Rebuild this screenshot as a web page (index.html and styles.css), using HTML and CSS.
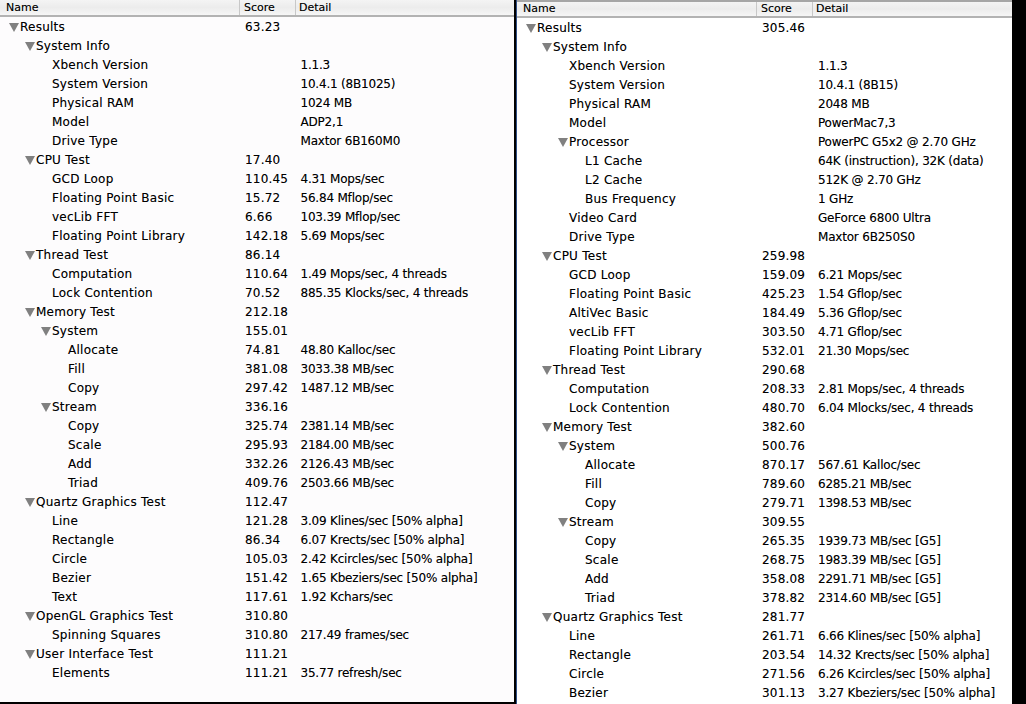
FILE: index.html
```html
<!DOCTYPE html>
<html lang="en">
<head>
<meta charset="utf-8">
<title>Xbench Results</title>
<link rel="stylesheet" href="styles.css">
</head>
<body>
<main class="stage">
<section class="panel panel-left">
<header class="head"><div class="h-name">Name</div><div class="h-score">Score</div><div class="h-detail">Detail</div></header>
<div class="row"><div class="name l0"><i class="tri"></i>Results</div><div class="score">63.23</div><div class="detail"></div></div>
<div class="row"><div class="name l1"><i class="tri"></i>System Info</div><div class="score"></div><div class="detail"></div></div>
<div class="row"><div class="name l2">Xbench Version</div><div class="score"></div><div class="detail">1.1.3</div></div>
<div class="row"><div class="name l2">System Version</div><div class="score"></div><div class="detail">10.4.1 (8B1025)</div></div>
<div class="row"><div class="name l2">Physical RAM</div><div class="score"></div><div class="detail">1024 MB</div></div>
<div class="row"><div class="name l2">Model</div><div class="score"></div><div class="detail">ADP2,1</div></div>
<div class="row"><div class="name l2">Drive Type</div><div class="score"></div><div class="detail">Maxtor 6B160M0</div></div>
<div class="row"><div class="name l1"><i class="tri"></i>CPU Test</div><div class="score">17.40</div><div class="detail"></div></div>
<div class="row"><div class="name l2">GCD Loop</div><div class="score">110.45</div><div class="detail">4.31 Mops/sec</div></div>
<div class="row"><div class="name l2">Floating Point Basic</div><div class="score">15.72</div><div class="detail">56.84 Mflop/sec</div></div>
<div class="row"><div class="name l2">vecLib FFT</div><div class="score">6.66</div><div class="detail">103.39 Mflop/sec</div></div>
<div class="row"><div class="name l2">Floating Point Library</div><div class="score">142.18</div><div class="detail">5.69 Mops/sec</div></div>
<div class="row"><div class="name l1"><i class="tri"></i>Thread Test</div><div class="score">86.14</div><div class="detail"></div></div>
<div class="row"><div class="name l2">Computation</div><div class="score">110.64</div><div class="detail">1.49 Mops/sec, 4 threads</div></div>
<div class="row"><div class="name l2">Lock Contention</div><div class="score">70.52</div><div class="detail">885.35 Klocks/sec, 4 threads</div></div>
<div class="row"><div class="name l1"><i class="tri"></i>Memory Test</div><div class="score">212.18</div><div class="detail"></div></div>
<div class="row"><div class="name l2"><i class="tri"></i>System</div><div class="score">155.01</div><div class="detail"></div></div>
<div class="row"><div class="name l3">Allocate</div><div class="score">74.81</div><div class="detail">48.80 Kalloc/sec</div></div>
<div class="row"><div class="name l3">Fill</div><div class="score">381.08</div><div class="detail">3033.38 MB/sec</div></div>
<div class="row"><div class="name l3">Copy</div><div class="score">297.42</div><div class="detail">1487.12 MB/sec</div></div>
<div class="row"><div class="name l2"><i class="tri"></i>Stream</div><div class="score">336.16</div><div class="detail"></div></div>
<div class="row"><div class="name l3">Copy</div><div class="score">325.74</div><div class="detail">2381.14 MB/sec</div></div>
<div class="row"><div class="name l3">Scale</div><div class="score">295.93</div><div class="detail">2184.00 MB/sec</div></div>
<div class="row"><div class="name l3">Add</div><div class="score">332.26</div><div class="detail">2126.43 MB/sec</div></div>
<div class="row"><div class="name l3">Triad</div><div class="score">409.76</div><div class="detail">2503.66 MB/sec</div></div>
<div class="row"><div class="name l1"><i class="tri"></i>Quartz Graphics Test</div><div class="score">112.47</div><div class="detail"></div></div>
<div class="row"><div class="name l2">Line</div><div class="score">121.28</div><div class="detail">3.09 Klines/sec [50% alpha]</div></div>
<div class="row"><div class="name l2">Rectangle</div><div class="score">86.34</div><div class="detail">6.07 Krects/sec [50% alpha]</div></div>
<div class="row"><div class="name l2">Circle</div><div class="score">105.03</div><div class="detail">2.42 Kcircles/sec [50% alpha]</div></div>
<div class="row"><div class="name l2">Bezier</div><div class="score">151.42</div><div class="detail">1.65 Kbeziers/sec [50% alpha]</div></div>
<div class="row"><div class="name l2">Text</div><div class="score">117.61</div><div class="detail">1.92 Kchars/sec</div></div>
<div class="row"><div class="name l1"><i class="tri"></i>OpenGL Graphics Test</div><div class="score">310.80</div><div class="detail"></div></div>
<div class="row"><div class="name l2">Spinning Squares</div><div class="score">310.80</div><div class="detail">217.49 frames/sec</div></div>
<div class="row"><div class="name l1"><i class="tri"></i>User Interface Test</div><div class="score">111.21</div><div class="detail"></div></div>
<div class="row"><div class="name l2">Elements</div><div class="score">111.21</div><div class="detail">35.77 refresh/sec</div></div>
</section>
<section class="panel panel-right">
<header class="head"><div class="h-name">Name</div><div class="h-score">Score</div><div class="h-detail">Detail</div></header>
<div class="row"><div class="name l0"><i class="tri"></i>Results</div><div class="score">305.46</div><div class="detail"></div></div>
<div class="row"><div class="name l1"><i class="tri"></i>System Info</div><div class="score"></div><div class="detail"></div></div>
<div class="row"><div class="name l2">Xbench Version</div><div class="score"></div><div class="detail">1.1.3</div></div>
<div class="row"><div class="name l2">System Version</div><div class="score"></div><div class="detail">10.4.1 (8B15)</div></div>
<div class="row"><div class="name l2">Physical RAM</div><div class="score"></div><div class="detail">2048 MB</div></div>
<div class="row"><div class="name l2">Model</div><div class="score"></div><div class="detail">PowerMac7,3</div></div>
<div class="row"><div class="name l2"><i class="tri"></i>Processor</div><div class="score"></div><div class="detail">PowerPC G5x2 @ 2.70 GHz</div></div>
<div class="row"><div class="name l3">L1 Cache</div><div class="score"></div><div class="detail">64K (instruction), 32K (data)</div></div>
<div class="row"><div class="name l3">L2 Cache</div><div class="score"></div><div class="detail">512K @ 2.70 GHz</div></div>
<div class="row"><div class="name l3">Bus Frequency</div><div class="score"></div><div class="detail">1 GHz</div></div>
<div class="row"><div class="name l2">Video Card</div><div class="score"></div><div class="detail">GeForce 6800 Ultra</div></div>
<div class="row"><div class="name l2">Drive Type</div><div class="score"></div><div class="detail">Maxtor 6B250S0</div></div>
<div class="row"><div class="name l1"><i class="tri"></i>CPU Test</div><div class="score">259.98</div><div class="detail"></div></div>
<div class="row"><div class="name l2">GCD Loop</div><div class="score">159.09</div><div class="detail">6.21 Mops/sec</div></div>
<div class="row"><div class="name l2">Floating Point Basic</div><div class="score">425.23</div><div class="detail">1.54 Gflop/sec</div></div>
<div class="row"><div class="name l2">AltiVec Basic</div><div class="score">184.49</div><div class="detail">5.36 Gflop/sec</div></div>
<div class="row"><div class="name l2">vecLib FFT</div><div class="score">303.50</div><div class="detail">4.71 Gflop/sec</div></div>
<div class="row"><div class="name l2">Floating Point Library</div><div class="score">532.01</div><div class="detail">21.30 Mops/sec</div></div>
<div class="row"><div class="name l1"><i class="tri"></i>Thread Test</div><div class="score">290.68</div><div class="detail"></div></div>
<div class="row"><div class="name l2">Computation</div><div class="score">208.33</div><div class="detail">2.81 Mops/sec, 4 threads</div></div>
<div class="row"><div class="name l2">Lock Contention</div><div class="score">480.70</div><div class="detail">6.04 Mlocks/sec, 4 threads</div></div>
<div class="row"><div class="name l1"><i class="tri"></i>Memory Test</div><div class="score">382.60</div><div class="detail"></div></div>
<div class="row"><div class="name l2"><i class="tri"></i>System</div><div class="score">500.76</div><div class="detail"></div></div>
<div class="row"><div class="name l3">Allocate</div><div class="score">870.17</div><div class="detail">567.61 Kalloc/sec</div></div>
<div class="row"><div class="name l3">Fill</div><div class="score">789.60</div><div class="detail">6285.21 MB/sec</div></div>
<div class="row"><div class="name l3">Copy</div><div class="score">279.71</div><div class="detail">1398.53 MB/sec</div></div>
<div class="row"><div class="name l2"><i class="tri"></i>Stream</div><div class="score">309.55</div><div class="detail"></div></div>
<div class="row"><div class="name l3">Copy</div><div class="score">265.35</div><div class="detail">1939.73 MB/sec [G5]</div></div>
<div class="row"><div class="name l3">Scale</div><div class="score">268.75</div><div class="detail">1983.39 MB/sec [G5]</div></div>
<div class="row"><div class="name l3">Add</div><div class="score">358.08</div><div class="detail">2291.71 MB/sec [G5]</div></div>
<div class="row"><div class="name l3">Triad</div><div class="score">378.82</div><div class="detail">2314.60 MB/sec [G5]</div></div>
<div class="row"><div class="name l1"><i class="tri"></i>Quartz Graphics Test</div><div class="score">281.77</div><div class="detail"></div></div>
<div class="row"><div class="name l2">Line</div><div class="score">261.71</div><div class="detail">6.66 Klines/sec [50% alpha]</div></div>
<div class="row"><div class="name l2">Rectangle</div><div class="score">203.54</div><div class="detail">14.32 Krects/sec [50% alpha]</div></div>
<div class="row"><div class="name l2">Circle</div><div class="score">271.56</div><div class="detail">6.26 Kcircles/sec [50% alpha]</div></div>
<div class="row"><div class="name l2">Bezier</div><div class="score">301.13</div><div class="detail">3.27 Kbeziers/sec [50% alpha]</div></div>
</section>
</main>
</body>
</html>
```
FILE: styles.css
```css
html, body { margin: 0; height: 100%; background: #000; overflow: hidden; }
.stage { display: flex; height: 704px; width: 1026px; overflow: hidden; font-family: "DejaVu Sans", sans-serif; font-size: 12px; color: #000; text-shadow: 0 0 0.6px rgba(0, 0, 0, 0.35); }
.panel { background: #fdfcfd; overflow: hidden; flex: none; }
.panel-left { width: 514px; height: 702px; margin-right: 3px; }
.panel-right { width: 495px; height: 704px; background: #fff; box-shadow: -1px 0 0 #2f4f86; }
.head { display: flex; box-sizing: border-box; height: 17px; margin-bottom: 1px; border-bottom: 2px solid #b3b3b3; background: linear-gradient(#f4f4f4, #ececec 50%, #f6f6f6); font-size: 11px; line-height: 15px; }
.panel-right .head { height: 18px; border-top: 2px solid #a6a6a6; line-height: 14px; }
.h-name { width: 240px; box-sizing: border-box; padding-left: 6px; border-right: 1px solid #c8c8c8; }
.h-score { width: 56px; box-sizing: border-box; padding-left: 4px; border-right: 1px solid #c8c8c8; }
.h-detail { flex: 1; padding-left: 3px; }
.row { display: flex; height: 19px; line-height: 19px; white-space: nowrap; }
.name { width: 245px; box-sizing: border-box; display: flex; align-items: center; letter-spacing: 0.25px; }
.score { width: 56px; letter-spacing: 0.2px; }
.detail { flex: 1; letter-spacing: -0.2px; }
.panel-left .detail { margin-left: -0.5px; }
.l0 { padding-left: 20px; }
.l1 { padding-left: 36px; }
.l2 { padding-left: 52px; }
.l3 { padding-left: 68px; }
.tri { flex: none; width: 10px; height: 9px; margin-left: -11px; margin-right: 1px; background: #808080; clip-path: polygon(0 0, 100% 0, 50% 100%); }
```
